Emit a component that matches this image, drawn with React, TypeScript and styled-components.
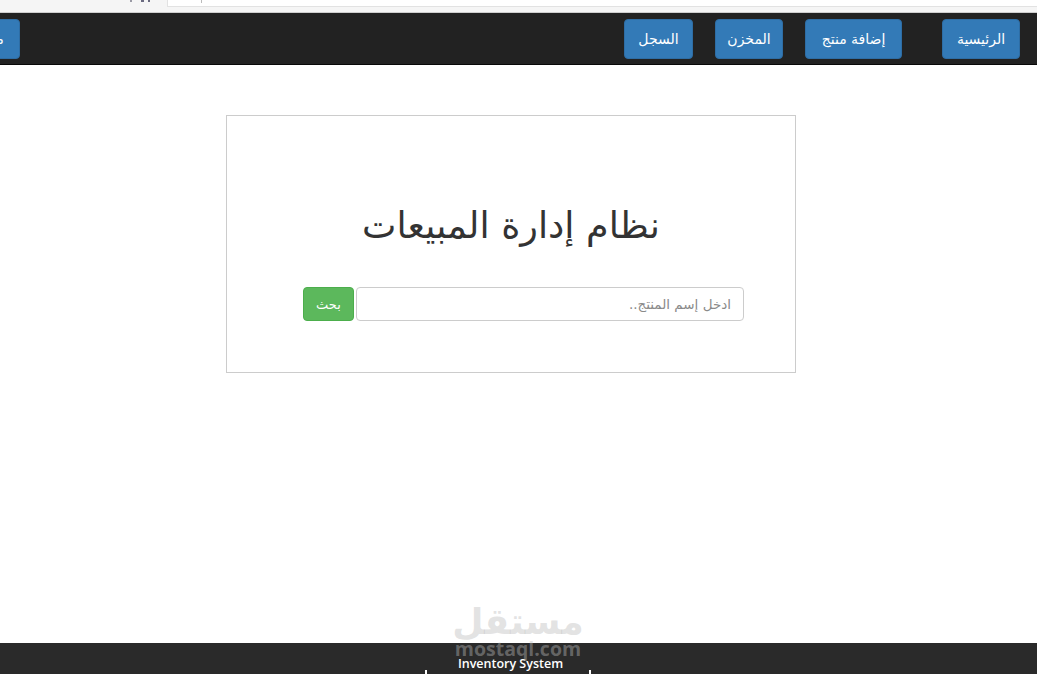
import React from 'react';
import styled, { createGlobalStyle } from 'styled-components';

const GlobalStyle = createGlobalStyle`
  html, body {
    margin: 0;
    padding: 0;
    height: 100%;
    overflow: hidden;
    background: #fff;
  }
  #root {
    height: 100%;
  }
`;

const Page = styled.div`
  height: 674px;
  display: flex;
  flex-direction: column;
  font-family: "DejaVu Sans", "Liberation Sans", sans-serif;
  overflow: hidden;
`;

const BrowserStrip = styled.div`
  height: 12px;
  flex: none;
  background: #f5f5f5;
  border-bottom: 1px solid #cfcfcf;
  display: flex;
  padding-left: 130px;
`;

const ToolbarIcons = styled.div`
  width: 20px;
  height: 2px;
  margin-right: 17px;
  background:
    linear-gradient(#9a9aa5, #9a9aa5) 0 0 / 2px 2px no-repeat,
    linear-gradient(#6a6a80, #6a6a80) 11px 0 / 3px 2px no-repeat,
    linear-gradient(#6a6a80, #6a6a80) 18px 0 / 2px 2px no-repeat;
`;

const AddressBar = styled.div`
  flex: 1;
  height: 6px;
  background: #fff;
  border-left: 1px solid #e2e2e2;
  border-bottom: 1px solid #e2e2e2;
  padding-left: 33px;
`;

const AddressDivider = styled.div`
  width: 1px;
  height: 3px;
  background: #bbb;
`;

const Navbar = styled.nav`
  height: 51px;
  flex: none;
  box-sizing: content-box;
  background: #222;
  border-bottom: 1px solid #080808;
  display: flex;
  align-items: center;
  direction: rtl;
  padding-right: 17px;
  overflow: hidden;
`;

const NavButton = styled.a<{ $gap?: number; $width: number }>`
  width: ${(p) => p.$width}px;
  height: 40px;
  flex: none;
  margin-right: ${(p) => p.$gap ?? 0}px;
  display: flex;
  align-items: center;
  justify-content: center;
  background: #337ab7;
  border: 1px solid #2e6da4;
  border-radius: 4px;
  box-sizing: border-box;
  color: #fff;
  font-size: 14px;
  white-space: nowrap;
`;

const Main = styled.main`
  flex: 1;
  display: flex;
  justify-content: center;
  padding-top: 50px;
  padding-right: 15px;
`;

const Card = styled.section`
  width: 570px;
  height: 258px;
  box-sizing: border-box;
  border: 1px solid #ccc;
  display: flex;
  flex-direction: column;
  align-items: center;
  direction: rtl;
`;

const Title = styled.h1`
  margin: 88px 0 0;
  font-size: 36.5px;
  line-height: 44px;
  font-weight: 400;
  color: #333;
`;

const SearchRow = styled.form`
  margin: 39px 51px 0 0;
  align-self: flex-start;
  display: flex;
  gap: 2px;
`;

const SearchInput = styled.input`
  width: 388px;
  height: 34px;
  box-sizing: border-box;
  border: 1px solid #ccc;
  border-radius: 4px;
  padding: 0 12px;
  font-family: inherit;
  font-size: 13.5px;
  direction: rtl;
  &::placeholder {
    color: #8a8a8a;
    opacity: 1;
  }
`;

const SearchButton = styled.button`
  width: 51px;
  height: 34px;
  box-sizing: border-box;
  background: #5cb85c;
  border: 1px solid #4cae4c;
  border-radius: 4px;
  color: #fff;
  font-family: inherit;
  font-size: 13px;
  padding: 0;
`;

const Footer = styled.footer`
  height: 31px;
  flex: none;
  background: #2a2a2a;
  display: flex;
  justify-content: center;
`;

const FooterLabel = styled.div`
  width: 166px;
  height: 31px;
  margin-right: 21px;
  box-sizing: border-box;
  padding: 13px 0 0 5px;
  text-align: center;
  color: #fff;
  font-family: "Open Sans", "Liberation Sans", sans-serif;
  font-size: 12.5px;
  font-weight: 600;
  line-height: 16px;
  white-space: nowrap;
  background:
    linear-gradient(#fff, #fff) left 27px / 2px 4px no-repeat,
    linear-gradient(#fff, #fff) right 27px / 2px 4px no-repeat;
`;

const Watermark = styled.div`
  position: absolute;
  left: 452px;
  top: 602px;
  width: 132px;
  text-align: center;
  color: rgba(187, 187, 187, 0.42);
  font-weight: 700;
  pointer-events: none;
`;

const WatermarkArabic = styled.div`
  font-size: 36px;
  line-height: 40px;
  direction: rtl;
`;

const WatermarkLatin = styled.div`
  font-family: "Open Sans", sans-serif;
  font-size: 19.5px;
  line-height: 14px;
`;

const App = () => (
  <Page>
    <GlobalStyle />
    <BrowserStrip>
      <ToolbarIcons />
      <AddressBar>
        <AddressDivider />
      </AddressBar>
    </BrowserStrip>
    <Navbar>
      <NavButton $width={78}>الرئيسية</NavButton>
      <NavButton $width={97} $gap={40}>إضافة منتج</NavButton>
      <NavButton $width={68} $gap={22}>المخزن</NavButton>
      <NavButton $width={69} $gap={22}>السجل</NavButton>
      <NavButton $width={80} $gap={604}>مساعدة</NavButton>
    </Navbar>
    <Main>
      <Card>
        <Title>نظام إدارة المبيعات</Title>
        <SearchRow>
          <SearchInput placeholder="ادخل إسم المنتج.." />
          <SearchButton type="button">بحث</SearchButton>
        </SearchRow>
      </Card>
    </Main>
    <Footer>
      <FooterLabel>Inventory System</FooterLabel>
    </Footer>
    <Watermark>
      <WatermarkArabic>مستقل</WatermarkArabic>
      <WatermarkLatin>mostaql.com</WatermarkLatin>
    </Watermark>
  </Page>
);

export default App;
